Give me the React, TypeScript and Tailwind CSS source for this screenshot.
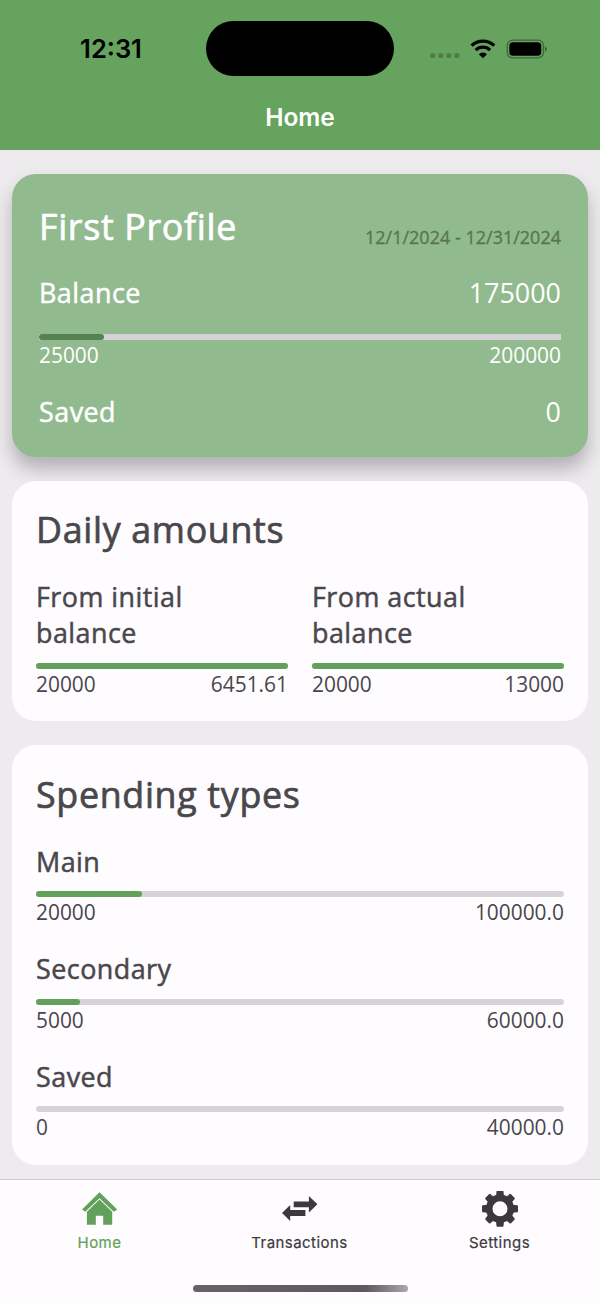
import React from "react";

function Progress({ left, right, percent, dark = false }: { left: string; right: string; percent: number; dark?: boolean }) {
  return (
    <div>
      <div className={dark ? "h-[6px] bg-[#d6d3d8]" : "h-[6px] rounded-full bg-[#d5d3d6]"}>
        <div className={dark ? "h-full rounded-full bg-[#568150]" : "h-full rounded-full bg-[#62a15a]"} style={{ width: `${percent}%` }} />
      </div>
      <div className="flex h-7 justify-between pt-px text-[20.9px] leading-[28px]">
        <span>{left}</span>
        <span>{right}</span>
      </div>
    </div>
  );
}

function Title({ children }: { children: React.ReactNode }) {
  return (
    <h2 className="h-[49px] text-[35.8px] leading-[50px] tracking-[0.68px] [-webkit-text-stroke:0.7px_currentColor]">{children}</h2>
  );
}

function Label({ children }: { children: React.ReactNode }) {
  return (
    <h3 className="relative top-px text-[26.9px] leading-[36.5px] tracking-[0.47px] [-webkit-text-stroke:0.5px_currentColor]">{children}</h3>
  );
}

function StatusBar() {
  return (
    <div className="grid h-[97px] grid-cols-3 items-center">
      <div className="pl-[22px] pt-px text-center font-[Inter,sans-serif] text-[25.5px] font-semibold text-black">12:31</div>
      <div className="mx-auto h-[55px] w-[188px] rounded-full bg-black" />
      <div className="flex items-center pl-[30px]">
        <svg width="118" height="24" viewBox="0 0 118 24">
          <g fill="#4d7c47">
            <circle cx="2.8" cy="18.5" r="2.6" />
            <circle cx="10.8" cy="18.5" r="2.6" />
            <circle cx="18.8" cy="18.5" r="2.6" />
            <circle cx="26.8" cy="18.5" r="2.6" />
          </g>
          <g fill="none" stroke="#000" strokeWidth="3.3">
            <path d="M41.6 8.6 A16.4 16.4 0 0 1 64.2 8.6" />
            <path d="M45.7 13.1 A10.4 10.4 0 0 1 60.1 13.1" />
          </g>
          <path d="M52.9 21.2 L48.8 17.2 A5.9 5.9 0 0 1 57 17.2 Z" />
          <rect x="77.2" y="3.2" width="36.3" height="17.6" rx="5.5" fill="none" stroke="#40663b" strokeWidth="1.3" />
          <rect x="79.3" y="5.3" width="32" height="13.4" rx="3.8" />
          <path d="M115 9.2 Q117 10.2 117 12 T115 14.8 Z" fill="#40663b" />
        </svg>
      </div>
    </div>
  );
}

function HomeIcon() {
  return (
    <svg width="36" height="36" viewBox="0 0 36 36" fill="#62a15a">
      <path d="M17.5 1.3 L35.2 18.5 L31.8 20.8 L17.5 7.2 L3.2 20.8 L0 18.5 Z" />
      <path d="M17.5 8.6 L30.2 20.7 V33.8 H21.2 V24.8 H13.8 V33.8 H4.9 V20.7 Z" />
    </svg>
  );
}

function TransferIcon() {
  return (
    <svg width="36" height="36" viewBox="0 0 36 36" fill="#3b393d">
      <path d="M11.7 10.6 H26.9 V5 L35.4 13.3 L26.9 21.4 V16.2 H11.7 Z" />
      <path d="M8.2 14 V18.9 H23.4 V24.9 H8.2 V30 L0 22 Z" />
    </svg>
  );
}

const TEETH = [0, 45, 90, 135, 180, 225, 270, 315];

function GearIcon() {
  return (
    <svg width="36" height="36" viewBox="0 0 36 36" fill="#3b393d">
      <circle cx="18" cy="17.7" r="10.8" fill="none" stroke="#3b393d" strokeWidth="6.6" />
      {TEETH.map((a) => (
        <path key={a} d="M15.2 0 H20.8 Q21.4 0 21.5 .8 L22 6 H14 L14.5 .8 Q14.6 0 15.2 0 Z" transform={`translate(0 -.3) rotate(${a} 18 18)`} />
      ))}
    </svg>
  );
}

const SPENDING = [
  { name: "Main", left: "20000", right: "100000.0", percent: 20 },
  { name: "Secondary", left: "5000", right: "60000.0", percent: 8.4 },
  { name: "Saved", left: "0", right: "40000.0", percent: 0 },
];

const TABS = [
  { label: "Home", icon: <HomeIcon />, color: "text-[#62a15a]" },
  { label: "Transactions", icon: <TransferIcon />, color: "text-[#3b393d]" },
  { label: "Settings", icon: <GearIcon />, color: "text-[#3b393d]" },
];

export default function App() {
  return (
    <div className="flex h-[1304px] w-[600px] flex-col overflow-hidden bg-[#edebee] font-['Open_Sans',sans-serif] text-[#49474b]">
      <header className="h-[150px] shrink-0 bg-[#66a35e]">
        <StatusBar />
        <h1 className="text-center font-[Inter,sans-serif] text-[24.5px] font-semibold leading-[40px] text-white">Home</h1>
      </header>

      <main className="flex h-[1029px] shrink-0 flex-col gap-6 px-3 pt-6">
        <section className="h-[282.5px] shrink-0 rounded-[24px] bg-[#92ba8f] px-[27px] pt-[26.5px] text-white shadow-[0_12px_18px_rgba(60,55,65,0.32)]">
          <div className="flex h-[49px] items-end justify-between">
            <Title>First Profile</Title>
            <span className="pb-px text-[17.9px] leading-[24px] tracking-[0.06px] text-[#567552] [-webkit-text-stroke:0.3px_currentColor]">12/1/2024 - 12/31/2024</span>
          </div>
          <div className="mt-6 flex justify-between">
            <Label>Balance</Label>
            <span className="pt-px text-[26.9px] leading-[35.5px]">175000</span>
          </div>
          <div className="mt-6">
            <Progress left="25000" right="200000" percent={12.5} dark />
          </div>
          <div className="mt-[25px] flex justify-between">
            <Label>Saved</Label>
            <span className="pt-px text-[26.9px] leading-[36.5px]">0</span>
          </div>
        </section>

        <section className="h-[240.5px] shrink-0 rounded-[24px] bg-[#fefcff] px-6 pt-[23.5px]">
          <Title>Daily amounts</Title>
          <div className="mt-[24.5px] grid grid-cols-2 gap-6">
            <div>
              <div className="mb-3 pr-8">
                <Label>From initial balance</Label>
              </div>
              <Progress left="20000" right="6451.61" percent={100} />
            </div>
            <div>
              <div className="mb-3 pr-8">
                <Label>From actual balance</Label>
              </div>
              <Progress left="20000" right="13000" percent={100} />
            </div>
          </div>
        </section>

        <section className="h-[419.5px] shrink-0 rounded-[24px] bg-[#fefcff] px-6 pt-6">
          <Title>Spending types</Title>
          <div className="mt-[24.5px] flex flex-col gap-[25px]">
            {SPENDING.map((s) => (
              <div key={s.name}>
                <div className="mb-3">
                  <Label>{s.name}</Label>
                </div>
                <Progress left={s.left} right={s.right} percent={s.percent} />
              </div>
            ))}
          </div>
        </section>
      </main>

      <footer className="flex flex-1 flex-col border-t border-[#cccacd] bg-[#fefcff]">
        <nav className="grid grid-cols-3 pt-[11px]">
          {TABS.map((t) => (
            <div key={t.label} className={`flex flex-col items-center ${t.color}`}>
              {t.icon}
              <span className="mt-[6px] pr-px font-[Inter,sans-serif] text-[15px] leading-[20px] tracking-[0.45px] [-webkit-text-stroke:0.2px_currentColor]">{t.label}</span>
            </div>
          ))}
        </nav>
        <div className="mx-auto mt-[32px] h-[7px] w-[215px] rounded-full bg-linear-to-r from-[#666467] from-0% via-[#5c5a5d] via-80% to-[#aaa8ab]" />
      </footer>
    </div>
  );
}
